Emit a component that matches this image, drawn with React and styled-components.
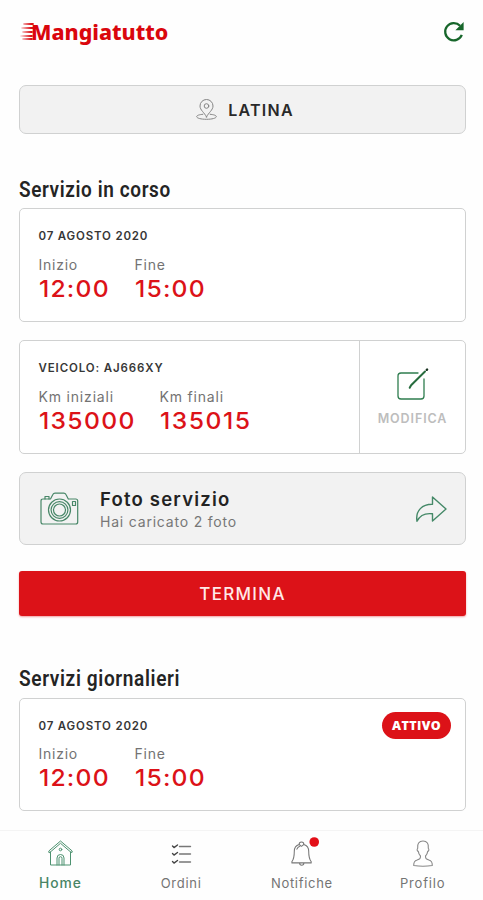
import React from "react";
import styled, { createGlobalStyle } from "styled-components";

const red = "#dc1218";
const green = "#2f7d4f";

const GlobalStyle = createGlobalStyle`
  * { box-sizing: border-box; }
  body { margin: 0; background: #fefefe; font-family: Inter, "Liberation Sans", sans-serif; }
  svg { display: block; flex: none; overflow: visible; fill: none; stroke-linecap: round; stroke-linejoin: round; }
`;

const Screen = styled.div`
  width: 483px;
  height: 900px;
  display: flex;
  flex-direction: column;
  overflow: hidden;
`;
const Header = styled.header`
  flex: none;
  height: 85px;
  padding: 20px 18px 0 21px;
  display: flex;
  justify-content: space-between;
  align-items: flex-start;
`;
const Logo = styled.div`
  display: flex;
  height: 24px;
`;
const LogoText = styled.span`
  font: 800 22px/22px "Noto Sans", sans-serif;
  height: 22px;
  color: #da060d;
  transform: scaleX(${(p) => p.$scale});
  transform-origin: left center;
  white-space: nowrap;
`;
const Main = styled.main`
  flex: none;
  height: 745px;
  padding: 0 17px 0 19px;
  display: flex;
  flex-direction: column;
`;
const panel = `
  border: 1.5px solid #d0d1d1;
  border-radius: 7px;
`;
const Location = styled.button`
  ${panel}
  flex: none;
  height: 49px;
  padding: 0 0 0 5px;
  background: #f2f2f2;
  display: flex;
  align-items: center;
  justify-content: center;
  gap: 11px;
  font: 600 16px/20px Inter, sans-serif;
  letter-spacing: 1.25px;
  color: #292929;
`;
const Heading = styled.h2`
  flex: none;
  margin: ${(p) => p.$top}px 0 ${(p) => p.$bottom}px;
  width: max-content;
  font: 600 21.5px/25px Roboto, sans-serif;
  color: #242424;
  letter-spacing: 0.7px;
  transform: scaleX(${(p) => p.$scale});
  transform-origin: left center;
`;
const Card = styled.section`
  ${panel}
  border-radius: 5px;
  flex: none;
  height: ${(p) => p.$height || 114}px;
  background: #fff;
  display: flex;
  justify-content: space-between;
  margin-bottom: ${(p) => p.$bottom || 0}px;
`;
const CardBody = styled.div`
  padding: 19px 0 0 18.5px;
`;
const Caption = styled.div`
  font: 600 11.5px/16px Inter, sans-serif;
  letter-spacing: ${(p) => p.$spacing}px;
  color: #373737;
`;
const Readings = styled.div`
  display: grid;
  grid-template-columns: ${(p) => p.$first}px auto;
  margin-top: ${(p) => p.$top || 12}px;
`;
const Label = styled.div`
  font: 400 14px/18px Inter, sans-serif;
  letter-spacing: ${(p) => p.$spacing || 0.75}px;
  color: #737373;
`;
const Value = styled.div`
  margin-top: 2px;
  width: max-content;
  font: 500 23.5px/26px Inter, sans-serif;
  letter-spacing: ${(p) => p.$spacing}px;
  color: ${red};
  transform: scaleX(1.05);
  transform-origin: left center;
`;
const Edit = styled.button`
  width: 106px;
  border: 0;
  border-left: 1.5px solid #d0d1d1;
  padding: 26px 0 0;
  background: none;
  display: flex;
  flex-direction: column;
  align-items: center;
  gap: 9px;
  font: 600 12.5px/17px Inter, sans-serif;
  letter-spacing: 0.9px;
  color: #bdbdbd;
`;
const PhotoRow = styled.section`
  ${panel}
  flex: none;
  height: 73px;
  background: #f2f2f2;
  display: flex;
  align-items: center;
  padding: 1px 18px 0 20px;
`;
const PhotoText = styled.div`
  flex: 1;
  margin-left: 21px;
  padding-top: 1px;
`;
const PhotoTitle = styled.div`
  font: 600 18.5px/24px Inter, sans-serif;
  letter-spacing: 1.2px;
  color: #232323;
`;
const PhotoNote = styled.div`
  font: 400 14px/21px Inter, sans-serif;
  letter-spacing: 0.8px;
  color: #777;
`;
const Finish = styled.button`
  flex: none;
  height: 45px;
  margin-top: 26px;
  padding: 0;
  border: 0;
  border-radius: 3px;
  background: ${red};
  color: #ffe9e8;
  box-shadow: 0 1px 2px #dc121866;
  font: 500 17px/20px Inter, sans-serif;
  letter-spacing: 1.3px;
`;
const Badge = styled.span`
  margin: 13px 14px 0 0;
  width: 69px;
  height: 27px;
  border-radius: 14px;
  background: ${red};
  color: #fff;
  text-align: center;
  font: 800 12.5px/27px "Open Sans", sans-serif;
  letter-spacing: 0.35px;
`;
const Nav = styled.nav`
  flex: none;
  height: 70px;
  border-top: 1px solid #f4f4f4;
  display: grid;
  grid-template-columns: repeat(4, 1fr);
`;
const NavItem = styled.a`
  display: flex;
  flex-direction: column;
  align-items: center;
  padding-top: 9px;
  gap: 7px;
  font: ${(p) => (p.$active ? 500 : 400)} ${(p) => (p.$active ? 13.8 : 13)}px/18px Inter, sans-serif;
  letter-spacing: ${(p) => p.$spacing}px;
  color: ${(p) => (p.$active ? "#498565" : "#747474")};
`;

const SpeedLines = () => (
  <svg width="10" height="24" viewBox="0 0 10 24">
    <defs>
      <linearGradient id="speed" gradientUnits="userSpaceOnUse" x1="0" y1="0" x2="10" y2="0">
        <stop stopColor={red} stopOpacity=".15" />
        <stop offset="1" stopColor={red} />
      </linearGradient>
    </defs>
    <path d="M3 4h9v.01M1 8h11v.01M2 12h9v.01M0 16h11v.01M2 19h9v.01" stroke="url(#speed)" strokeWidth="1.8" />
  </svg>
);
const Refresh = () => (
  <svg width="22" height="24" viewBox="0 0 24 24">
    <path d="M20.5 15.2A9.4 9.4 0 1 1 18.6 5.2" stroke="#17662b" strokeWidth="2.5" strokeLinecap="butt" />
    <path d="M22.5 1.2V10h-9Z" fill="#17662b" />
  </svg>
);
const Pin = () => (
  <svg width="21" height="22" viewBox="0 0 21 22" stroke="#858585" strokeWidth="1">
    <path d="M10.5 18C8.5 13.5 4 11.2 4 7a6.5 6.5 0 0 1 13 0c0 4.2-4.5 6.5-6.5 11Z" />
    <circle cx="10.5" cy="7" r="2.3" />
    <path d="M6.8 15.3C3.5 15.6.7 16.3.7 17.6c0 1.6 4.4 2.7 9.8 2.7s9.8-1.1 9.8-2.7c0-1.3-2.8-2-6.1-2.3" />
  </svg>
);
const EditIcon = () => (
  <svg width="32" height="34" viewBox="0 0 32 34">
    <path d="M21 6H4a3 3 0 0 0-3 3v20a3 3 0 0 0 3 3h20a3 3 0 0 0 3-3V12" stroke={green} strokeWidth="1.3" />
    <path d="m12.7 20.8 1.4-2.5L28 4.5" stroke="#276c3e" strokeWidth="2" />
    <path d="m29.8 2.8.3-.3" stroke="#17311f" strokeWidth="2.4" />
  </svg>
);
const Camera = () => (
  <svg width="39" height="34" viewBox="0 0 39 34" stroke="#488768" strokeWidth="1.2">
    <path d="M28.5 7h7.2q2 0 2 2v21q0 2-2 2H3q-2 0-2-2V9q0-2 2-2h7.5L13 2.3q.6-1.2 2-1.2h8.8q1.4 0 2 1.2L28.3 7" />
    <path d="M5 7V4.5h4V7M32.5 9.5h3v4h-3z" />
    <circle cx="19.5" cy="18" r="11" fill="#f2f2f2" />
    <circle cx="19.5" cy="18" r="8.4" />
    <circle cx="19.5" cy="18" r="6" />
  </svg>
);
const Share = () => (
  <svg width="32" height="27" viewBox="0 0 32 27" stroke="#458968" strokeWidth="1.4">
    <path d="M17.5 1 31 13 17.5 25v-7.2C9.5 16.8 5 19 2 25.3.2 14.5 7.5 8 17.5 8.2Z" />
  </svg>
);
const Home = () => (
  <svg width="25" height="27" viewBox="0 0 25 27" stroke="#4d9270" strokeWidth="1">
    <path d="M2.5 12V25h20V12M1 12.5.8 11 12.5 1l11.7 10-.2 1.5-1.5-.6-10-8.6-10 8.6ZM9 25v-7a3.5 3.5 0 0 1 7 0v7M11 25v-6.8a1.5 1.5 0 0 1 3 0V25" />
    <circle cx="12.5" cy="9.5" r="1.3" />
  </svg>
);
const Orders = () => (
  <svg width="21" height="27" viewBox="0 0 21 27" strokeWidth="1.4">
    <path d="M8.5 6.5h11M8.5 14h11M8.5 22h11" stroke="#777" />
    <path d="m1.5 6.1 1.5 1.5L6.5 5M1.5 13.6 3 15.1l3.5-2.6M1.5 21.6 3 23.1l3.5-2.6" stroke="#444" />
  </svg>
);
const Bell = () => (
  <svg width="23" height="27" viewBox="0 0 24 27" stroke="#777" strokeWidth="1.1">
    <path d="M9.5 4a2.5 2.5 0 0 1 5 0c3.2 1 5 3.5 5 7 0 6.5.5 8.5 2.6 11v1.3H2V22c2.1-2.5 2.5-4.5 2.5-11 0-3.5 1.8-6 5-7ZM10 23.5a2.2 2.2 0 0 0 4.5 0M9.5 4l2.5 2 2.5-2M7.2 9c.6-1.7 1.5-2.5 3-3" />
    <circle cx="25.3" cy="1.5" r="5" fill="#e30f18" stroke="none" />
  </svg>
);
const Profile = () => (
  <svg width="20" height="27" viewBox="0 0 20 27" stroke="#888" strokeWidth="1.1">
    <path d="M7.5 16c-1.4-1.3-2-3-2.2-4.6-1.3-.3-1.5-2.3-.6-3C4 4 6 1 10 1s6 3 5.3 7.4c.9.7.7 2.7-.6 3-.2 1.6-.8 3.3-2.2 4.6 0 2.5.5 3 3.4 4 2.6.8 3.4 1.8 3.4 5.5q-9.3 1.5-18.6 0c0-3.7.8-4.7 3.4-5.5 2.9-1 3.4-1.5 3.4-4Z" />
  </svg>
);

const ServiceCard = ({ height, bottom, gap, badge }) => (
  <Card $height={height} $bottom={bottom}>
    <CardBody>
      <Caption $spacing={0.82}>07 AGOSTO 2020</Caption>
      <Readings $first={96} $top={gap}>
        <div><Label>Inizio</Label><Value $spacing={1.15}>12:00</Value></div>
        <div><Label>Fine</Label><Value $spacing={1.15}>15:00</Value></div>
      </Readings>
    </CardBody>
    {badge && <Badge>{badge}</Badge>}
  </Card>
);

export default function App() {
  return (
    <Screen>
      <GlobalStyle />
      <Header>
        <Logo><SpeedLines /><LogoText $scale={0.974}>Mangiatutto</LogoText></Logo>
        <Refresh />
      </Header>
      <Main>
        <Location><Pin />LATINA</Location>
        <Heading $top={43} $bottom={6} $scale={0.882}>Servizio in corso</Heading>
        <ServiceCard bottom={18} />
        <Card $bottom={18}>
          <CardBody>
            <Caption $spacing={0.88}>VEICOLO: AJ666XY</Caption>
            <Readings $first={121}>
              <div><Label $spacing={0.82}>Km iniziali</Label><Value $spacing={1.25}>135000</Value></div>
              <div><Label $spacing={0.82}>Km finali</Label><Value $spacing={1.45}>135015</Value></div>
            </Readings>
          </CardBody>
          <Edit><EditIcon />MODIFICA</Edit>
        </Card>
        <PhotoRow>
          <Camera />
          <PhotoText>
            <PhotoTitle>Foto servizio</PhotoTitle>
            <PhotoNote>Hai caricato 2 foto</PhotoNote>
          </PhotoText>
          <Share />
        </PhotoRow>
        <Finish>TERMINA</Finish>
        <Heading $top={50} $bottom={7} $scale={0.888}>Servizi giornalieri</Heading>
        <ServiceCard height={113} gap={11} badge="ATTIVO" />
      </Main>
      <Nav>
        <NavItem $active $spacing={0.9}><Home />Home</NavItem>
        <NavItem $spacing={0.7}><Orders />Ordini</NavItem>
        <NavItem $spacing={0.7}><Bell />Notifiche</NavItem>
        <NavItem $spacing={0.8}><Profile />Profilo</NavItem>
      </Nav>
    </Screen>
  );
}
